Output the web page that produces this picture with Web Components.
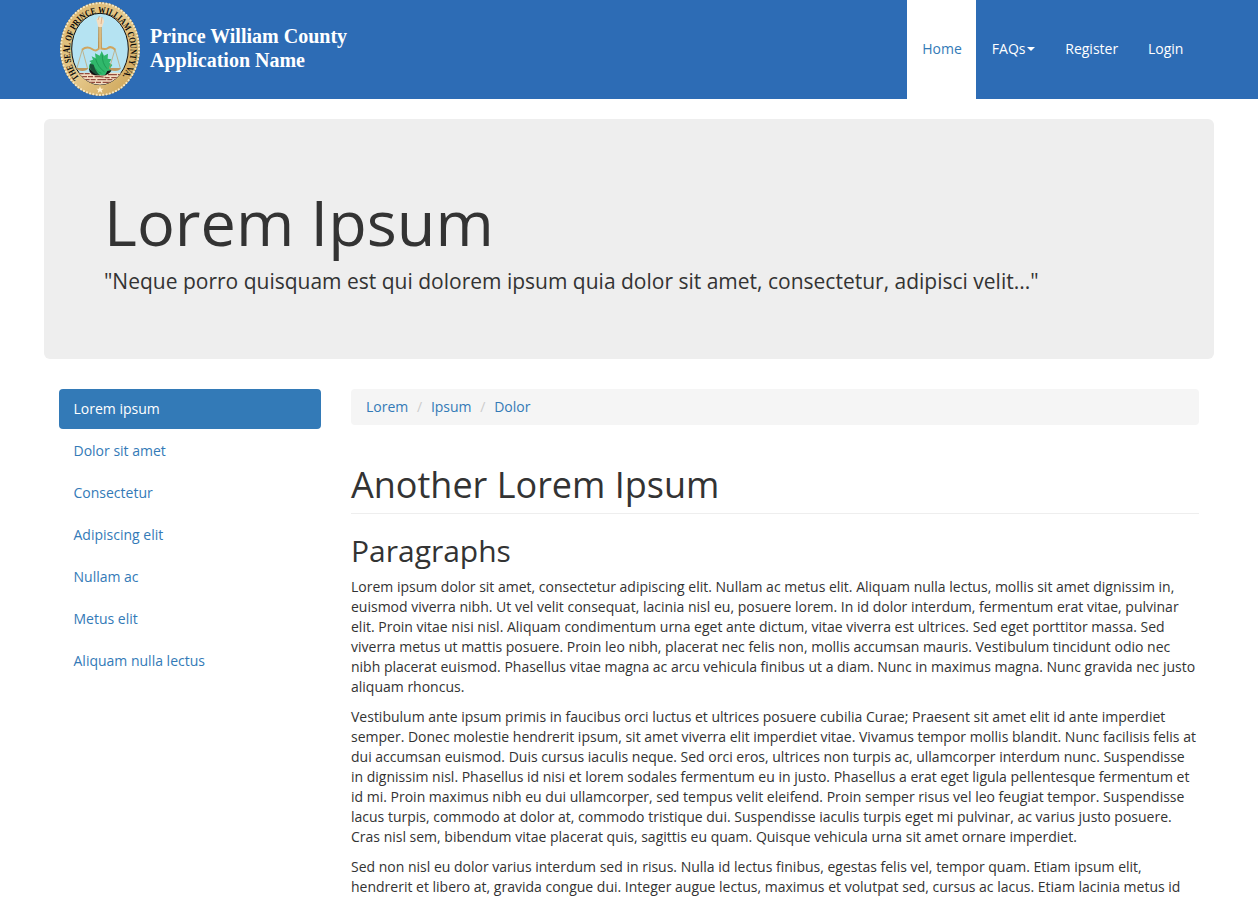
<!DOCTYPE html>
<html lang="en">
<head>
<meta charset="utf-8">
<title>Prince William County Application Name</title>
<style>
html,body{margin:0;height:898px;overflow:hidden;background:#fff}
body{font:14px/20px "Open Sans",sans-serif;color:#333}
</style>
</head>
<body>
<pwc-app></pwc-app>
<script>
const define=(name,html)=>customElements.define(name,class extends HTMLElement{
  constructor(){
    super();
    const t=document.createElement('template');
    t.innerHTML=html;
    this.attachShadow({mode:'open'}).appendChild(t.content.cloneNode(true));
  }
});

define('county-seal',`
<style>:host{display:block;width:100px;height:99px}svg{display:block}</style>
<svg width="100" height="100" viewBox="0 0 300 300">
  <defs>
    <linearGradient id="gold" x1="0" y1="0" x2="1" y2="1">
      <stop offset="0" stop-color="#d9b56c"/><stop offset=".5" stop-color="#e6c98c"/><stop offset="1" stop-color="#c99f4f"/>
    </linearGradient>
    <linearGradient id="post" x1="0" x2="1"><stop offset="0" stop-color="#a87c3c"/><stop offset=".5" stop-color="#e8cb91"/><stop offset="1" stop-color="#b78b48"/></linearGradient>
    <clipPath id="oval"><ellipse cx="150" cy="147" rx="85" ry="107"/></clipPath>
    <path id="ring" d="M88 233A91 112 0 1 1 215 231"/>
  </defs>
  <ellipse cx="150" cy="147" rx="118" ry="139" fill="url(#gold)" stroke="#c29a52" stroke-width="3"/>
  <ellipse cx="150" cy="147" rx="117" ry="138" fill="none" stroke="#f7e9c4" stroke-width="6" stroke-linecap="round" stroke-dasharray="1 9"/>
  <ellipse cx="150" cy="147" rx="85" ry="107" fill="#b5e3f2" stroke="#111" stroke-width="3"/>
  <g clip-path="url(#oval)">
    <path d="M60 218H240V260H60Z" fill="#f3dcc0"/>
    <path d="M74 221H122L140 224H230M84 230H150L170 233H220M92 239H204M108 247H190" fill="none" stroke="#934b3c" stroke-width="4" stroke-dasharray="27 3 15 5"/>
    <path d="M118 199Q112 218 134 226H166Q184 220 186 205Z" fill="#111"/>
    <path d="M119 207Q113 195 124 188L118 183 129 179 125 169 137 175 135 160 149 167 155 153 162 167 174 161 173 176 184 178 178 188 187 195 181 204 183 211 172 213 166 224Q148 229 135 219Z" fill="#30b86b"/>
    <path d="M126 190Q136 213 154 220M137 177Q144 202 164 216M157 164Q156 190 171 206" fill="none" stroke="#1f9b56" stroke-width="3"/>
    <path d="M120 191Q115 210 137 223L150 226Q135 212 131 194Z" fill="#1b5037"/>
    <path d="M97 148L80 207M97 148L113 207M195 148L178 205M195 148L211 205" stroke="#c19c5e" stroke-width="2"/>
    <path d="M79 204H115Q111 213 97 213T79 204ZM177 204H213Q209 213 195 213T177 204Z" fill="#be965c"/>
    <path d="M96 149Q111 137 126 147T148 143Q165 151 174 144T196 149" fill="none" stroke="#d0a55e" stroke-width="6"/>
    <path d="M145 78H155L156 143 150 150 144 143Z" fill="url(#post)"/>
    <path d="M139 59Q140 53 150 51Q161 52 162 65L156 81H145Z" fill="#f5dec0"/>
    <path d="M148 48L144 60M156 51L153 72" stroke="#cf9c70" stroke-width="2"/>
  </g>
  <text font-family="Liberation Serif,serif" font-size="28" font-weight="700" fill="#080808"><textPath href="#ring" textLength="488" lengthAdjust="spacingAndGlyphs">THE SEAL OF PRINCE WILLIAM COUNTY VA.</textPath></text>
  <path d="M150 258L153 266 161 266 155 271 157 279 150 274 143 279 145 271 139 266 147 266Z" fill="#fff2d2"/>
</svg>`);

define('nav-item',`
<style>
:host{display:flex;align-items:center;height:98px;padding:0 15px 0 14.8px;color:#fff;box-sizing:border-box}
:host([active]){background:#fff;color:#337ab7;height:99px;padding:0 14.4px 1px 15px;margin-right:.8px}
i{display:none;border:4px solid transparent;border-top-color:currentColor;border-bottom:0;margin-left:2px}
:host([menu]) i{display:block}
</style><slot></slot><i></i>`);

define('site-header',`
<style>
:host{display:block;background:#2d6cb5;height:99px}
.in{width:1170px;margin:0 auto;display:flex;height:99px}
county-seal{margin-left:6px}
.name{font:700 20px/24px "Liberation Serif",serif;color:#fff;padding-top:24px;white-space:nowrap}
nav{margin-left:auto;margin-right:15.6px;display:flex}
</style>
<div class="in"><county-seal></county-seal><div class="name"><div>Prince William County</div><div>Application Name</div></div>
<nav><nav-item active>Home</nav-item><nav-item menu>FAQs</nav-item><nav-item>Register</nav-item><nav-item>Login</nav-item></nav></div>`);

define('hero-banner',`
<style>
:host{display:block;width:1170px;height:240px;margin:20px auto 30px;padding:68px 60px 0;background:#eee;border-radius:6px;box-sizing:border-box;white-space:nowrap}
.t{font-size:63px;line-height:69.3px;margin-bottom:10px}
.s{font-size:21px;line-height:30px}
</style>
<div class="t"><slot name="title"></slot></div><div class="s"><slot></slot></div>`);

define('side-link',`
<style>
:host{display:block;padding:10px 14.5px;border-radius:4px;color:#337ab7}
:host([active]){background:#337ab7;color:#fff}
</style><slot></slot>`);

define('bread-crumb',`
<style>
:host{display:flex;background:#f5f5f5;border-radius:4px;padding:8px 15px;color:#337ab7;height:20px}
b{font-weight:400;color:#ccc;width:22.6px;text-align:center}
</style><span>Lorem</span><b>/</b><span>Ipsum</span><b>/</b><span>Dolor</span>`);

define('text-block',`<style>:host{display:block;white-space:pre;margin-bottom:10px}</style><slot></slot>`);

define('pwc-app',`
<style>
:host{display:block;height:898px;overflow:hidden}
main{width:1140px;margin:0 auto;display:grid;grid-template-columns:262px 848px;gap:30px;align-items:start}
aside{display:grid;gap:2px}
h1,h2{font-weight:400;margin:0;white-space:nowrap}
h1{font-size:36px;line-height:39.6px;padding-bottom:8.4px;border-bottom:1px solid #eee;margin:40px 0 20px}
h2{font-size:30px;line-height:33px;margin-bottom:10px}
</style>
<site-header></site-header>
<hero-banner><span slot="title">Lorem Ipsum</span>"Neque porro quisquam est qui dolorem ipsum quia dolor sit amet, consectetur, adipisci velit..."</hero-banner>
<main>
<aside><side-link active>Lorem ipsum</side-link><side-link>Dolor sit amet</side-link><side-link>Consectetur</side-link><side-link>Adipiscing elit</side-link><side-link>Nullam ac</side-link><side-link>Metus elit</side-link><side-link>Aliquam nulla lectus</side-link></aside>
<section><bread-crumb></bread-crumb>
<h1>Another Lorem Ipsum</h1>
<h2>Paragraphs</h2>
<text-block>Lorem ipsum dolor sit amet, consectetur adipiscing elit. Nullam ac metus elit. Aliquam nulla lectus, mollis sit amet dignissim in,
euismod viverra nibh. Ut vel velit consequat, lacinia nisl eu, posuere lorem. In id dolor interdum, fermentum erat vitae, pulvinar
elit. Proin vitae nisi nisl. Aliquam condimentum urna eget ante dictum, vitae viverra est ultrices. Sed eget porttitor massa. Sed
viverra metus ut mattis posuere. Proin leo nibh, placerat nec felis non, mollis accumsan mauris. Vestibulum tincidunt odio nec
nibh placerat euismod. Phasellus vitae magna ac arcu vehicula finibus ut a diam. Nunc in maximus magna. Nunc gravida nec justo
aliquam rhoncus.</text-block>
<text-block>Vestibulum ante ipsum primis in faucibus orci luctus et ultrices posuere cubilia Curae; Praesent sit amet elit id ante imperdiet
semper. Donec molestie hendrerit ipsum, sit amet viverra elit imperdiet vitae. Vivamus tempor mollis blandit. Nunc facilisis felis at
dui accumsan euismod. Duis cursus iaculis neque. Sed orci eros, ultrices non turpis ac, ullamcorper interdum nunc. Suspendisse
in dignissim nisl. Phasellus id nisi et lorem sodales fermentum eu in justo. Phasellus a erat eget ligula pellentesque fermentum et
id mi. Proin maximus nibh eu dui ullamcorper, sed tempus velit eleifend. Proin semper risus vel leo feugiat tempor. Suspendisse
lacus turpis, commodo at dolor at, commodo tristique dui. Suspendisse iaculis turpis eget mi pulvinar, ac varius justo posuere.
Cras nisl sem, bibendum vitae placerat quis, sagittis eu quam. Quisque vehicula urna sit amet ornare imperdiet.</text-block>
<text-block>Sed non nisl eu dolor varius interdum sed in risus. Nulla id lectus finibus, egestas felis vel, tempor quam. Etiam ipsum elit,
hendrerit et libero at, gravida congue dui. Integer augue lectus, maximus et volutpat sed, cursus ac lacus. Etiam lacinia metus id</text-block>
</section></main>`);
</script>
</body>
</html>
